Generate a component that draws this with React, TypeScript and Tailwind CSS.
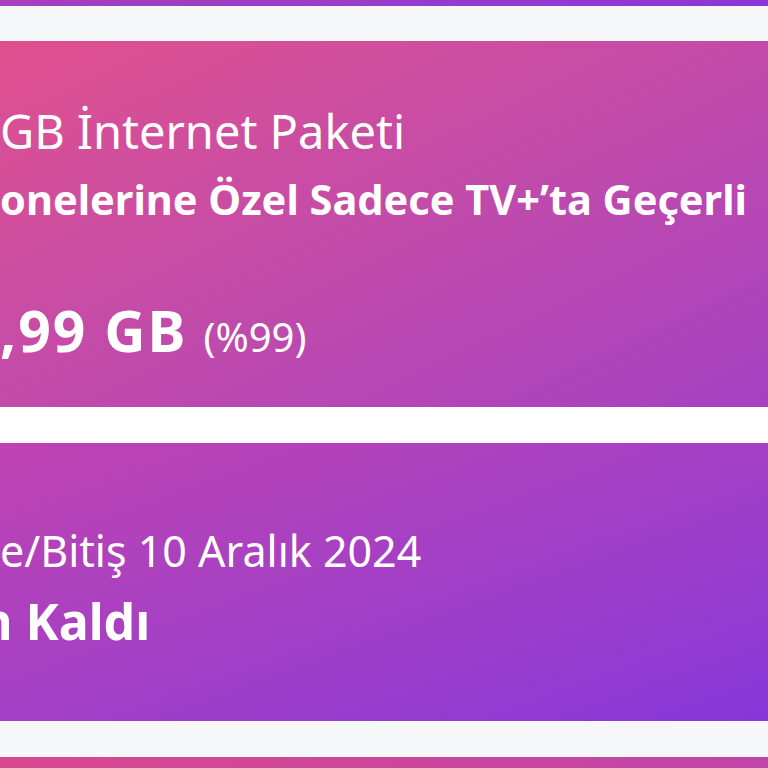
import React from "react";

const font = { fontFamily: "'Noto Sans', Lato, sans-serif" };

export default function App() {
  return (
    <div
      className="min-h-[768px] w-[768px] overflow-hidden bg-[#f6f7f9] flex flex-col text-white"
      style={font}
    >
      {/* bottom of the previous card */}
      <div className="h-[6px] bg-linear-to-r from-[#a53fbd] to-[#8a36d8]" />

      {/* Package card */}
      <div className="mt-[35px] h-[366px] bg-linear-to-br from-[#e0508e] to-[#a63fc2] pt-[62px] flex flex-col">
        <p className="text-[47px] leading-[56px] font-normal whitespace-nowrap">
          GB İnternet Paketi
        </p>
        <p className="mt-[18px] text-[41.5px] leading-[44px] font-bold whitespace-nowrap">
          onelerine Özel Sadece TV+’ta Geçerli
        </p>
        <p className="mt-[77px] leading-[64px] whitespace-nowrap flex items-baseline gap-[16px]">
          <span className="text-[57px] font-bold tracking-[2px]">,99 GB</span>
          <span className="text-[40px] font-normal">(%99)</span>
        </p>
      </div>

      <div className="h-[36px] bg-white" />

      {/* Renewal card */}
      <div className="h-[278px] bg-linear-to-br from-[#bf42b1] to-[#8836d9] pt-[83px] flex flex-col">
        <p className="text-[43px] leading-[50px] font-normal whitespace-nowrap">
          e/Bitiş 10 Aralık 2024
        </p>
        <p className="mt-[15px] -ml-[20px] text-[50px] leading-[60px] font-bold whitespace-nowrap">
          n Kaldı
        </p>
      </div>

      {/* top of the next card */}
      <div className="mt-[36px] flex-1 bg-linear-to-r from-[#d8488e] to-[#c045a8]" />
    </div>
  );
}
